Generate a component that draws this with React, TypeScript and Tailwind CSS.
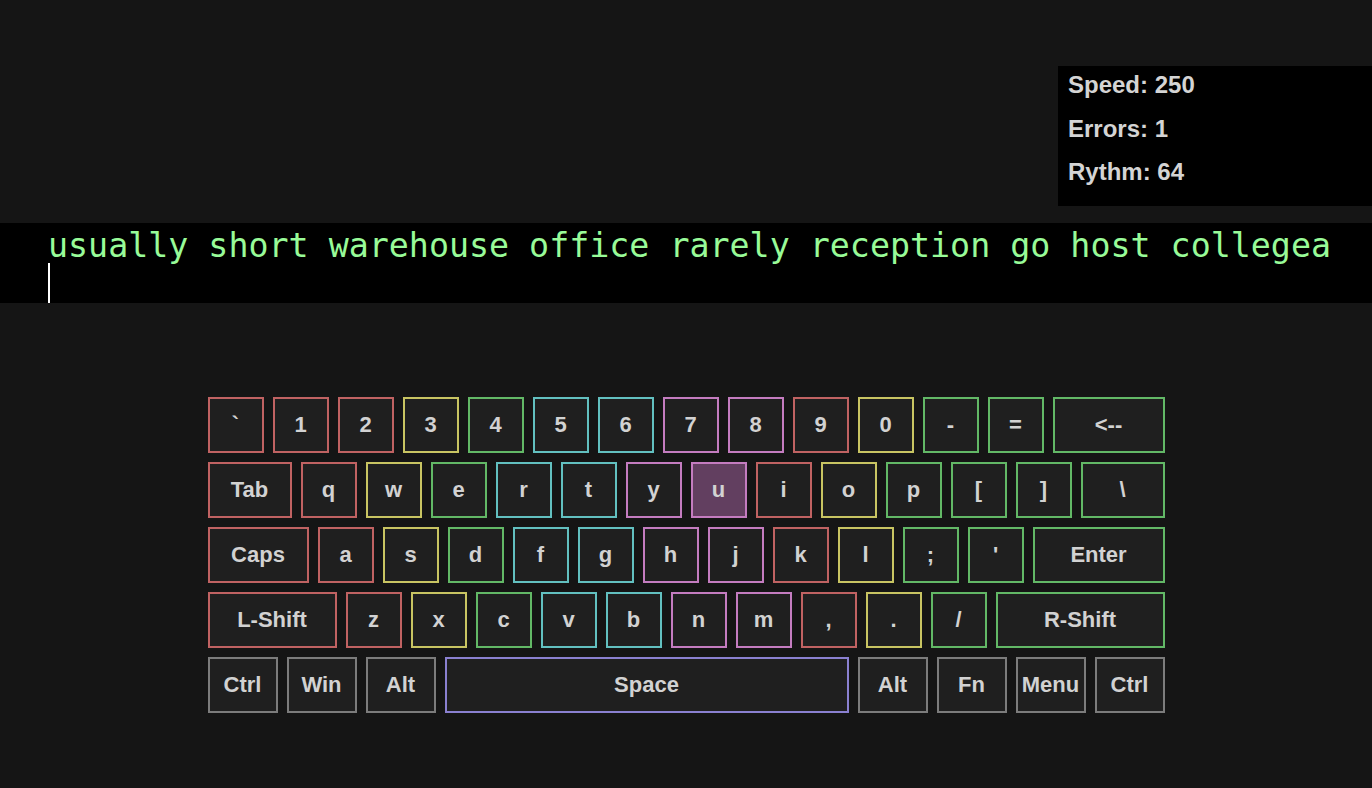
type Tone = 'red' | 'yellow' | 'green' | 'cyan' | 'pink' | 'gray' | 'violet'

type KeyDef = { label: string; tone: Tone; w?: string; active?: boolean }

const toneClass: Record<Tone, string> = {
  red: 'border-[#c06262]',
  yellow: 'border-[#c8c462]',
  green: 'border-[#62b866]',
  cyan: 'border-[#62c0c0]',
  pink: 'border-[#c47cc0]',
  gray: 'border-[#7c7c7c]',
  violet: 'border-[#8a80d0]',
}

const rows: KeyDef[][] = [
  [
    { label: '`', tone: 'red' },
    { label: '1', tone: 'red' },
    { label: '2', tone: 'red' },
    { label: '3', tone: 'yellow' },
    { label: '4', tone: 'green' },
    { label: '5', tone: 'cyan' },
    { label: '6', tone: 'cyan' },
    { label: '7', tone: 'pink' },
    { label: '8', tone: 'pink' },
    { label: '9', tone: 'red' },
    { label: '0', tone: 'yellow' },
    { label: '-', tone: 'green' },
    { label: '=', tone: 'green' },
    { label: '<--', tone: 'green', w: 'w-[112px]' },
  ],
  [
    { label: 'Tab', tone: 'red', w: 'w-[84px]' },
    { label: 'q', tone: 'red' },
    { label: 'w', tone: 'yellow' },
    { label: 'e', tone: 'green' },
    { label: 'r', tone: 'cyan' },
    { label: 't', tone: 'cyan' },
    { label: 'y', tone: 'pink' },
    { label: 'u', tone: 'pink', active: true },
    { label: 'i', tone: 'red' },
    { label: 'o', tone: 'yellow' },
    { label: 'p', tone: 'green' },
    { label: '[', tone: 'green' },
    { label: ']', tone: 'green' },
    { label: '\\', tone: 'green', w: 'w-[84px]' },
  ],
  [
    { label: 'Caps', tone: 'red', w: 'w-[101px]' },
    { label: 'a', tone: 'red' },
    { label: 's', tone: 'yellow' },
    { label: 'd', tone: 'green' },
    { label: 'f', tone: 'cyan' },
    { label: 'g', tone: 'cyan' },
    { label: 'h', tone: 'pink' },
    { label: 'j', tone: 'pink' },
    { label: 'k', tone: 'red' },
    { label: 'l', tone: 'yellow' },
    { label: ';', tone: 'green' },
    { label: "'", tone: 'green' },
    { label: 'Enter', tone: 'green', w: 'w-[132px]' },
  ],
  [
    { label: 'L-Shift', tone: 'red', w: 'w-[129px]' },
    { label: 'z', tone: 'red' },
    { label: 'x', tone: 'yellow' },
    { label: 'c', tone: 'green' },
    { label: 'v', tone: 'cyan' },
    { label: 'b', tone: 'cyan' },
    { label: 'n', tone: 'pink' },
    { label: 'm', tone: 'pink' },
    { label: ',', tone: 'red' },
    { label: '.', tone: 'yellow' },
    { label: '/', tone: 'green' },
    { label: 'R-Shift', tone: 'green', w: 'w-[169px]' },
  ],
  [
    { label: 'Ctrl', tone: 'gray', w: 'w-[70px]' },
    { label: 'Win', tone: 'gray', w: 'w-[70px]' },
    { label: 'Alt', tone: 'gray', w: 'w-[70px]' },
    { label: 'Space', tone: 'violet', w: 'w-[404px]' },
    { label: 'Alt', tone: 'gray', w: 'w-[70px]' },
    { label: 'Fn', tone: 'gray', w: 'w-[70px]' },
    { label: 'Menu', tone: 'gray', w: 'w-[70px]' },
    { label: 'Ctrl', tone: 'gray', w: 'w-[70px]' },
  ],
]

function Key({ k }: { k: KeyDef }) {
  return (
    <div
      className={`flex h-[56px] shrink-0 items-center justify-center border-2 pb-[2px] text-[22px] font-bold text-[#d2d2d2] ${
        k.w ?? 'w-[56px]'
      } ${toneClass[k.tone]} ${k.active ? 'bg-[#623f60]' : 'bg-[#1f1f1f]'}`}
    >
      {k.label}
    </div>
  )
}

export default function App() {
  return (
    <main
      className="min-h-screen bg-[#151515] pb-[76px]"
      style={{ fontFamily: '"Liberation Sans", Arial, sans-serif' }}
    >
      <div className="flex justify-end pt-[66px]">
        <section className="flex h-[140px] w-[314px] flex-col gap-[16.5px] bg-black px-[10px] pt-[5px] text-[24px] leading-[27px] font-bold text-[#d4d4d4]">
          <p>Speed: 250</p>
          <p>Errors: 1</p>
          <p>Rythm: 64</p>
        </section>
      </div>

      <section className="mt-[17px] h-[80px] bg-black pl-[48px] font-['DejaVu_Sans_Mono',monospace] text-[33.3px] text-[#98fb98]">
        <div className="h-[40px] whitespace-pre leading-[45px]">
          usually short warehouse office rarely reception go host collegea
        </div>
        <div className="h-[40px] w-[2px] bg-white" />
      </section>

      <section className="mx-auto mt-[94px] flex w-[957px] flex-col gap-[9px]">
        {rows.map((row, i) => (
          <div key={i} className="flex gap-[9px]">
            {row.map((k, j) => (
              <Key key={j} k={k} />
            ))}
          </div>
        ))}
      </section>
    </main>
  )
}
